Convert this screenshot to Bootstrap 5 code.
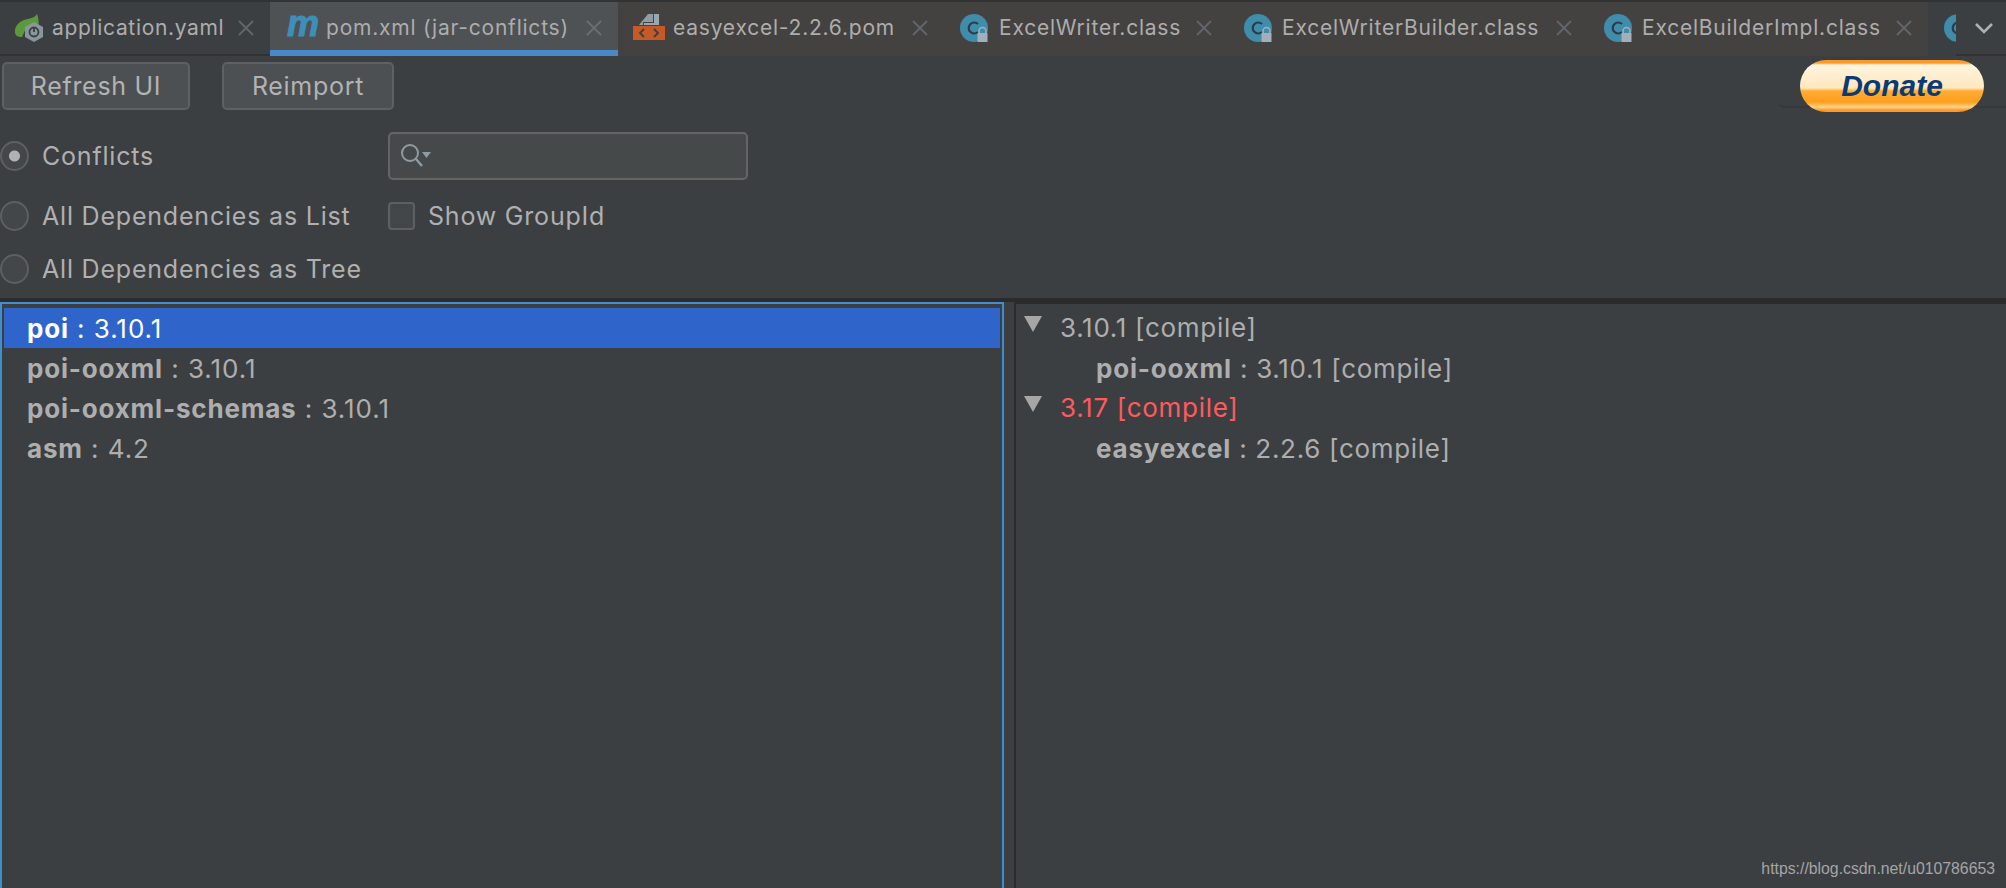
<!DOCTYPE html>
<html lang="en">
<head>
<meta charset="utf-8">
<title>pom.xml (jar-conflicts)</title>
<link rel="stylesheet" href="https://cdn.jsdelivr.net/npm/bootstrap@5.3.0/dist/css/bootstrap.min.css">
<style>
html,body{height:888px;overflow:hidden}
body{background:#3c3f41;font-family:Inter,"Noto Sans",sans-serif;color:#adadad;width:2006px;position:relative}
.ide-tabs{height:56px;background:#3c3f41;border-top:2px solid #313335;box-shadow:inset 0 -2px 0 #323232;font-size:21px;letter-spacing:.78px;color:#adadad;white-space:nowrap}
.ide-tab{height:54px;flex:none;align-items:center;padding-bottom:2px;padding-right:16px}
.ide-tab.foreign{background:#444240}
.ide-tab.current{background:#4e5254;height:54px;box-shadow:inset 0 -6px 0 #4a88c7;padding-bottom:2px}
.w-app{width:270px;padding-left:14px;letter-spacing:.67px}
.w-pom{width:348px;padding-left:17px}
.w-easy{width:326px;padding-left:15px}
.w-writer{width:284px;padding-left:16px}
.w-builder{width:360px;padding-left:16px}
.w-impl{width:340px;padding-left:16px}
.w-last{width:28px;padding-left:16px;padding-right:0;overflow:hidden;background:#3c3f41}
.tab-label{margin-left:10px}
.tab-x{margin-left:auto;flex:none}
.maven-m{font:italic 700 36px/34px "Liberation Sans",sans-serif;color:#3e8fb8;width:30px;letter-spacing:-1px;margin-top:-8px;-webkit-text-stroke:1px #3e8fb8}
.ide-chevron{margin-left:18px;padding-right:0}
.bar-btn{background:#4c5052;border:2px solid #5e6163;border-radius:5px;color:#b3b3b3;font-size:25px;letter-spacing:.7px;height:48px;padding:0;line-height:1}
.bar-btn:hover{background:#4c5052;color:#b3b3b3;border-color:#5e6163}
.btn-refresh{width:188px;margin-left:2px}
.btn-reimport{width:172px;margin-left:32px}
.ide-toolbar{height:58px;padding-top:6px}
.donate-wrap{position:absolute;left:1777px;top:60px;width:229px;height:48px;border-bottom:2px solid #36393b;border-bottom-left-radius:8px}
.donate{position:absolute;left:1800px;top:60px;width:184px;height:52px;border-radius:26px;border:0;padding:0;background:linear-gradient(#fb9a2a 0,#fb9a2a 3px,#fff4df 5px,#ffe8bf 28px,#ffad33 31px,#ff9d1e 42px,#ffd587 47px,#fb9a2a 50px);font:italic 700 30px/52px "Liberation Sans",sans-serif;color:#0b3b74}
.opts{display:grid;grid-template-columns:388px 360px;align-items:center;height:184px;padding-top:18px;padding-bottom:12px;grid-template-rows:48px 72px 34px}
.opt-line{font-size:25px;letter-spacing:.8px;color:#b0b0b0;margin:0;padding:0;min-height:0}
.opt-line .form-check-input{float:none;margin:0 13px 0 0;width:29px;height:30px;background-color:#43474a;border:2px solid #5d5f60;flex:none}
.opt-line .form-check-input:checked{background-color:#43474a;border-color:#5d5f60;background-image:radial-gradient(circle,#afb1b3 0 5px,transparent 6px)}
.opt-line .group-check{width:27px;height:28px;border-radius:4px;margin-right:13px;background-color:#43474a}
.opt-text{margin-top:2px}
.search-wrap{position:relative;width:360px;height:48px}
.search-wrap .form-control{height:48px;background:#45494a;border:2px solid #646464;border-radius:5px}
.search-glass{position:absolute;left:10px;top:10px}
.ide-sep{height:4px;background:#2b2b2b}
.panes{height:586px}
.pane-left{width:1004px;flex:none;border:2px solid #3e8ed0;border-bottom:0;padding:4px 2px 0}
.pane-right{flex:1;margin-left:10px;border-left:2px solid #2b2b2b;border-top:2px solid #2b2b2b;padding-top:4px}
.dep-row{height:40px;font-size:26px;line-height:42px;padding-left:23px;color:#aeaeae;letter-spacing:.95px;white-space:nowrap}
.dep-row b{font-weight:700;letter-spacing:.8px}
.dep-row.picked{background:#2f65ca;color:#fff}
.tree-row{height:40px;font-size:26px;line-height:42px;color:#aeaeae;letter-spacing:.7px;white-space:nowrap;padding-left:8px;align-items:center}
.tree-row b{font-weight:700;letter-spacing:.8px}
.tree-row svg{margin-right:18px;margin-top:-8px;flex:none}
.tree-child{padding-left:80px}
.clash{color:#ff5a5f}
.stamp{position:absolute;right:11px;top:860px;font:15.8px/18px "Liberation Sans",sans-serif;color:#a3a5a7}
</style>
</head>
<body>
<div class="ide-tabs d-flex">
  <div class="ide-tab d-flex w-app">
    <svg width="32" height="28" viewBox="0 0 32 28"><path d="M1 19C0 10 8 6 14 5c5-1 8-3 9-5 2 5 2 11 1 14H12l-4 9C4 23 2 22 1 19z" fill="#5a9a3c"/><path d="M20 8l9 5v10l-9 5-9-5V13z" fill="#8a969e"/><circle cx="20" cy="18" r="4.5" fill="none" stroke="#3c3f41" stroke-width="1.8"/><path d="M20 13v5" stroke="#3c3f41" stroke-width="1.8"/></svg>
    <span class="tab-label" style="margin-left:6px">application.yaml</span>
    <svg class="tab-x" width="16" height="16" viewBox="0 0 16 16"><path d="M1 1l14 14M15 1L1 15" stroke="#62666a" stroke-width="1.8"/></svg>
  </div>
  <div class="ide-tab current d-flex w-pom">
    <span class="maven-m">m</span>
    <span class="tab-label" style="margin-left:9px">pom.xml (jar-conflicts)</span>
    <svg class="tab-x" width="16" height="16" viewBox="0 0 16 16"><path d="M1 1l14 14M15 1L1 15" stroke="#6a6e72" stroke-width="1.8"/></svg>
  </div>
  <div class="ide-tab foreign d-flex w-easy">
    <svg width="32" height="32" viewBox="0 0 32 32"><path d="M6 13L15 2h5v8H10v3z" fill="#9aa7b0" opacity=".9"/><path d="M21 2h5v11H11v-2h10z" fill="#9aa7b0"/><path d="M0 14h32v14H0z" fill="#c55a27"/><path d="M11 17l-4 4 4 4M21 17l4 4-4 4" fill="none" stroke="#3c3f41" stroke-width="1.8"/></svg>
    <span class="tab-label" style="margin-left:8px">easyexcel-2.2.6.pom</span>
    <svg class="tab-x" width="16" height="16" viewBox="0 0 16 16"><path d="M1 1l14 14M15 1L1 15" stroke="#62666a" stroke-width="1.8"/></svg>
  </div>
  <div class="ide-tab foreign d-flex w-writer">
    <svg width="30" height="32" viewBox="0 0 30 32"><use href="#class-ic"/></svg>
    <span class="tab-label" style="margin-left:9px">ExcelWriter.class</span>
    <svg class="tab-x" width="16" height="16" viewBox="0 0 16 16"><path d="M1 1l14 14M15 1L1 15" stroke="#62666a" stroke-width="1.8"/></svg>
  </div>
  <div class="ide-tab foreign d-flex w-builder">
    <svg width="30" height="32" viewBox="0 0 30 32"><use href="#class-ic"/></svg>
    <span class="tab-label" style="margin-left:8px">ExcelWriterBuilder.class</span>
    <svg class="tab-x" width="16" height="16" viewBox="0 0 16 16"><path d="M1 1l14 14M15 1L1 15" stroke="#62666a" stroke-width="1.8"/></svg>
  </div>
  <div class="ide-tab foreign d-flex w-impl">
    <svg width="30" height="32" viewBox="0 0 30 32"><use href="#class-ic"/></svg>
    <span class="tab-label" style="margin-left:8px">ExcelBuilderImpl.class</span>
    <svg class="tab-x" width="16" height="16" viewBox="0 0 16 16"><path d="M1 1l14 14M15 1L1 15" stroke="#62666a" stroke-width="1.8"/></svg>
  </div>
  <div class="ide-tab d-flex w-last">
    <svg class="flex-shrink-0" width="30" height="32" viewBox="0 0 30 32"><use href="#class-ic"/></svg>
  </div>
  <div class="ide-tab d-flex ide-chevron">
    <svg width="20" height="12" viewBox="0 0 20 12"><path d="M2 2l8 8 8-8" fill="none" stroke="#afb1b3" stroke-width="2.6"/></svg>
  </div>
</div>

<svg width="0" height="0" class="position-absolute"><defs><g id="class-ic"><circle cx="14" cy="16" r="14" fill="#3f8cab"/><path d="M18 12a5.5 5.5 0 1 0 0 8" fill="none" stroke="#2b3d46" stroke-width="2.2"/><path d="M19 21v-2a3.500 3.500 0 0 1 7 0v2" fill="none" stroke="#a3b0bb" stroke-width="1.6"/><path d="M17.500 21h10v9h-10z" fill="#a3b0bb"/></g></defs></svg>

<div class="ide-toolbar d-flex align-items-start">
  <button class="btn bar-btn btn-refresh" type="button">Refresh UI</button>
  <button class="btn bar-btn btn-reimport" type="button">Reimport</button>
</div>
<div class="donate-wrap"></div>
<button class="donate" type="button">Donate</button>

<div class="opts">
  <label class="opt-line form-check d-flex align-items-center"><input class="form-check-input" type="radio" name="view" checked><span class="opt-text">Conflicts</span></label>
  <div class="search-wrap">
    <input class="form-control" type="text" aria-label="Search">
    <svg class="search-glass" width="36" height="30" viewBox="0 0 36 30"><circle cx="12" cy="11" r="8" fill="none" stroke="#8f9ba3" stroke-width="2"/><path d="M18 17l6 7" stroke="#8f9ba3" stroke-width="2.4"/><path d="M24 10h9l-4.500 6z" fill="#8f9ba3"/></svg>
  </div>
  <label class="opt-line form-check d-flex align-items-center"><input class="form-check-input" type="radio" name="view"><span class="opt-text">All Dependencies as List</span></label>
  <label class="opt-line form-check d-flex align-items-center"><input class="form-check-input group-check" type="checkbox"><span class="opt-text">Show GroupId</span></label>
  <label class="opt-line form-check d-flex align-items-center"><input class="form-check-input" type="radio" name="view"><span class="opt-text">All Dependencies as Tree</span></label>
</div>
<div class="ide-sep"></div>

<div class="panes d-flex">
  <div class="pane-left">
    <div class="dep-row picked"><b>poi</b> : 3.10.1</div>
    <div class="dep-row"><b>poi-ooxml</b> : 3.10.1</div>
    <div class="dep-row"><b>poi-ooxml-schemas</b> : 3.10.1</div>
    <div class="dep-row"><b>asm</b> : 4.2</div>
  </div>
  <div class="pane-right">
    <div class="tree-row d-flex"><svg width="18" height="16" viewBox="0 0 18 16"><path d="M0 0h18L9 16z" fill="#a6a6a6"/></svg><span>3.10.1 [compile]</span></div>
    <div class="tree-row tree-child"><span><b>poi-ooxml</b> : 3.10.1 [compile]</span></div>
    <div class="tree-row d-flex"><svg width="18" height="16" viewBox="0 0 18 16"><path d="M0 0h18L9 16z" fill="#a6a6a6"/></svg><span class="clash">3.17 [compile]</span></div>
    <div class="tree-row tree-child"><span><b>easyexcel</b> : 2.2.6 [compile]</span></div>
  </div>
</div>
<div class="stamp">https://blog.csdn.net/u010786653</div>
<script src="https://cdn.jsdelivr.net/npm/bootstrap@5.3.0/dist/js/bootstrap.bundle.min.js"></script>
</body>
</html>
